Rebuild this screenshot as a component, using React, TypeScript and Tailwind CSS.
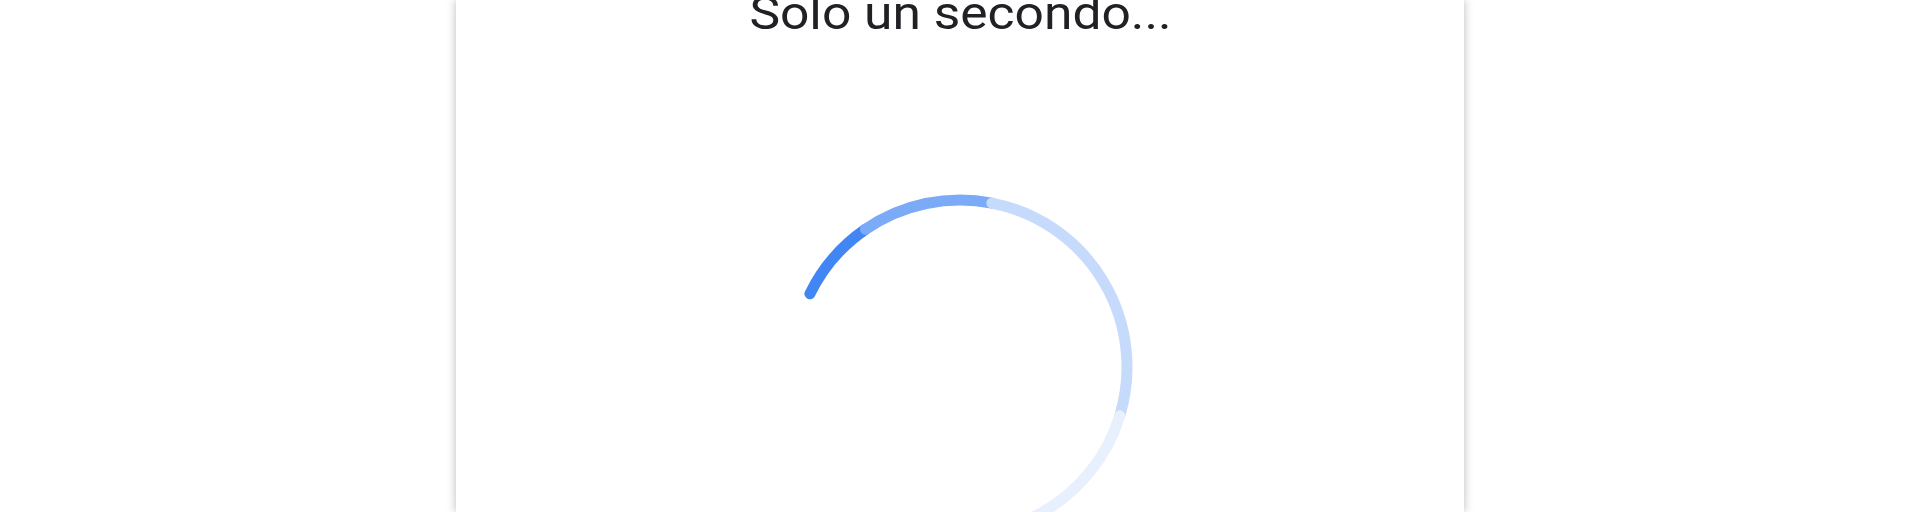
const CX = 176
const CY = 176
const R = 167

// point on the ring, angle in degrees (0 = right, counter-clockwise)
function pt(deg: number) {
  const a = (deg * Math.PI) / 180
  return `${(CX + R * Math.cos(a)).toFixed(2)} ${(CY - R * Math.sin(a)).toFixed(2)}`
}

// clockwise arc from one angle down to another
function arc(from: number, to: number) {
  const large = from - to > 180 ? 1 : 0
  return `M ${pt(from)} A ${R} ${R} 0 ${large} 1 ${pt(to)}`
}

const SEGMENTS = [
  { from: 154, to: 124.5, color: '#4285f4' },
  { from: 124.5, to: 79, color: '#7baaf7' },
  { from: 79, to: -17, color: '#c6dafc' },
  { from: -17, to: -105, color: '#e8f0fe' },
]

function Spinner() {
  return (
    <svg width="352" height="352" viewBox="0 0 352 352" fill="none" className="mt-[155px] shrink-0">
      {SEGMENTS.map((s, i) => (
        <path key={i} d={arc(s.from, s.to)} stroke={s.color} strokeWidth={11} strokeLinecap="round" />
      ))}
    </svg>
  )
}

export default function App() {
  return (
    <div className="h-[512px] w-full overflow-hidden bg-white">
      <div className="mx-auto flex h-full w-[1008px] flex-col items-center bg-white shadow-[0_0_9px_rgba(0,0,0,0.28)]">
        <h1
          className="-mt-[10px] shrink-0 scale-x-[1.12] text-[46px] leading-none font-normal text-[#202124]"
          style={{ fontFamily: 'Roboto, "Noto Sans", sans-serif' }}
        >
          Solo un secondo...
        </h1>
        <Spinner />
      </div>
    </div>
  )
}
